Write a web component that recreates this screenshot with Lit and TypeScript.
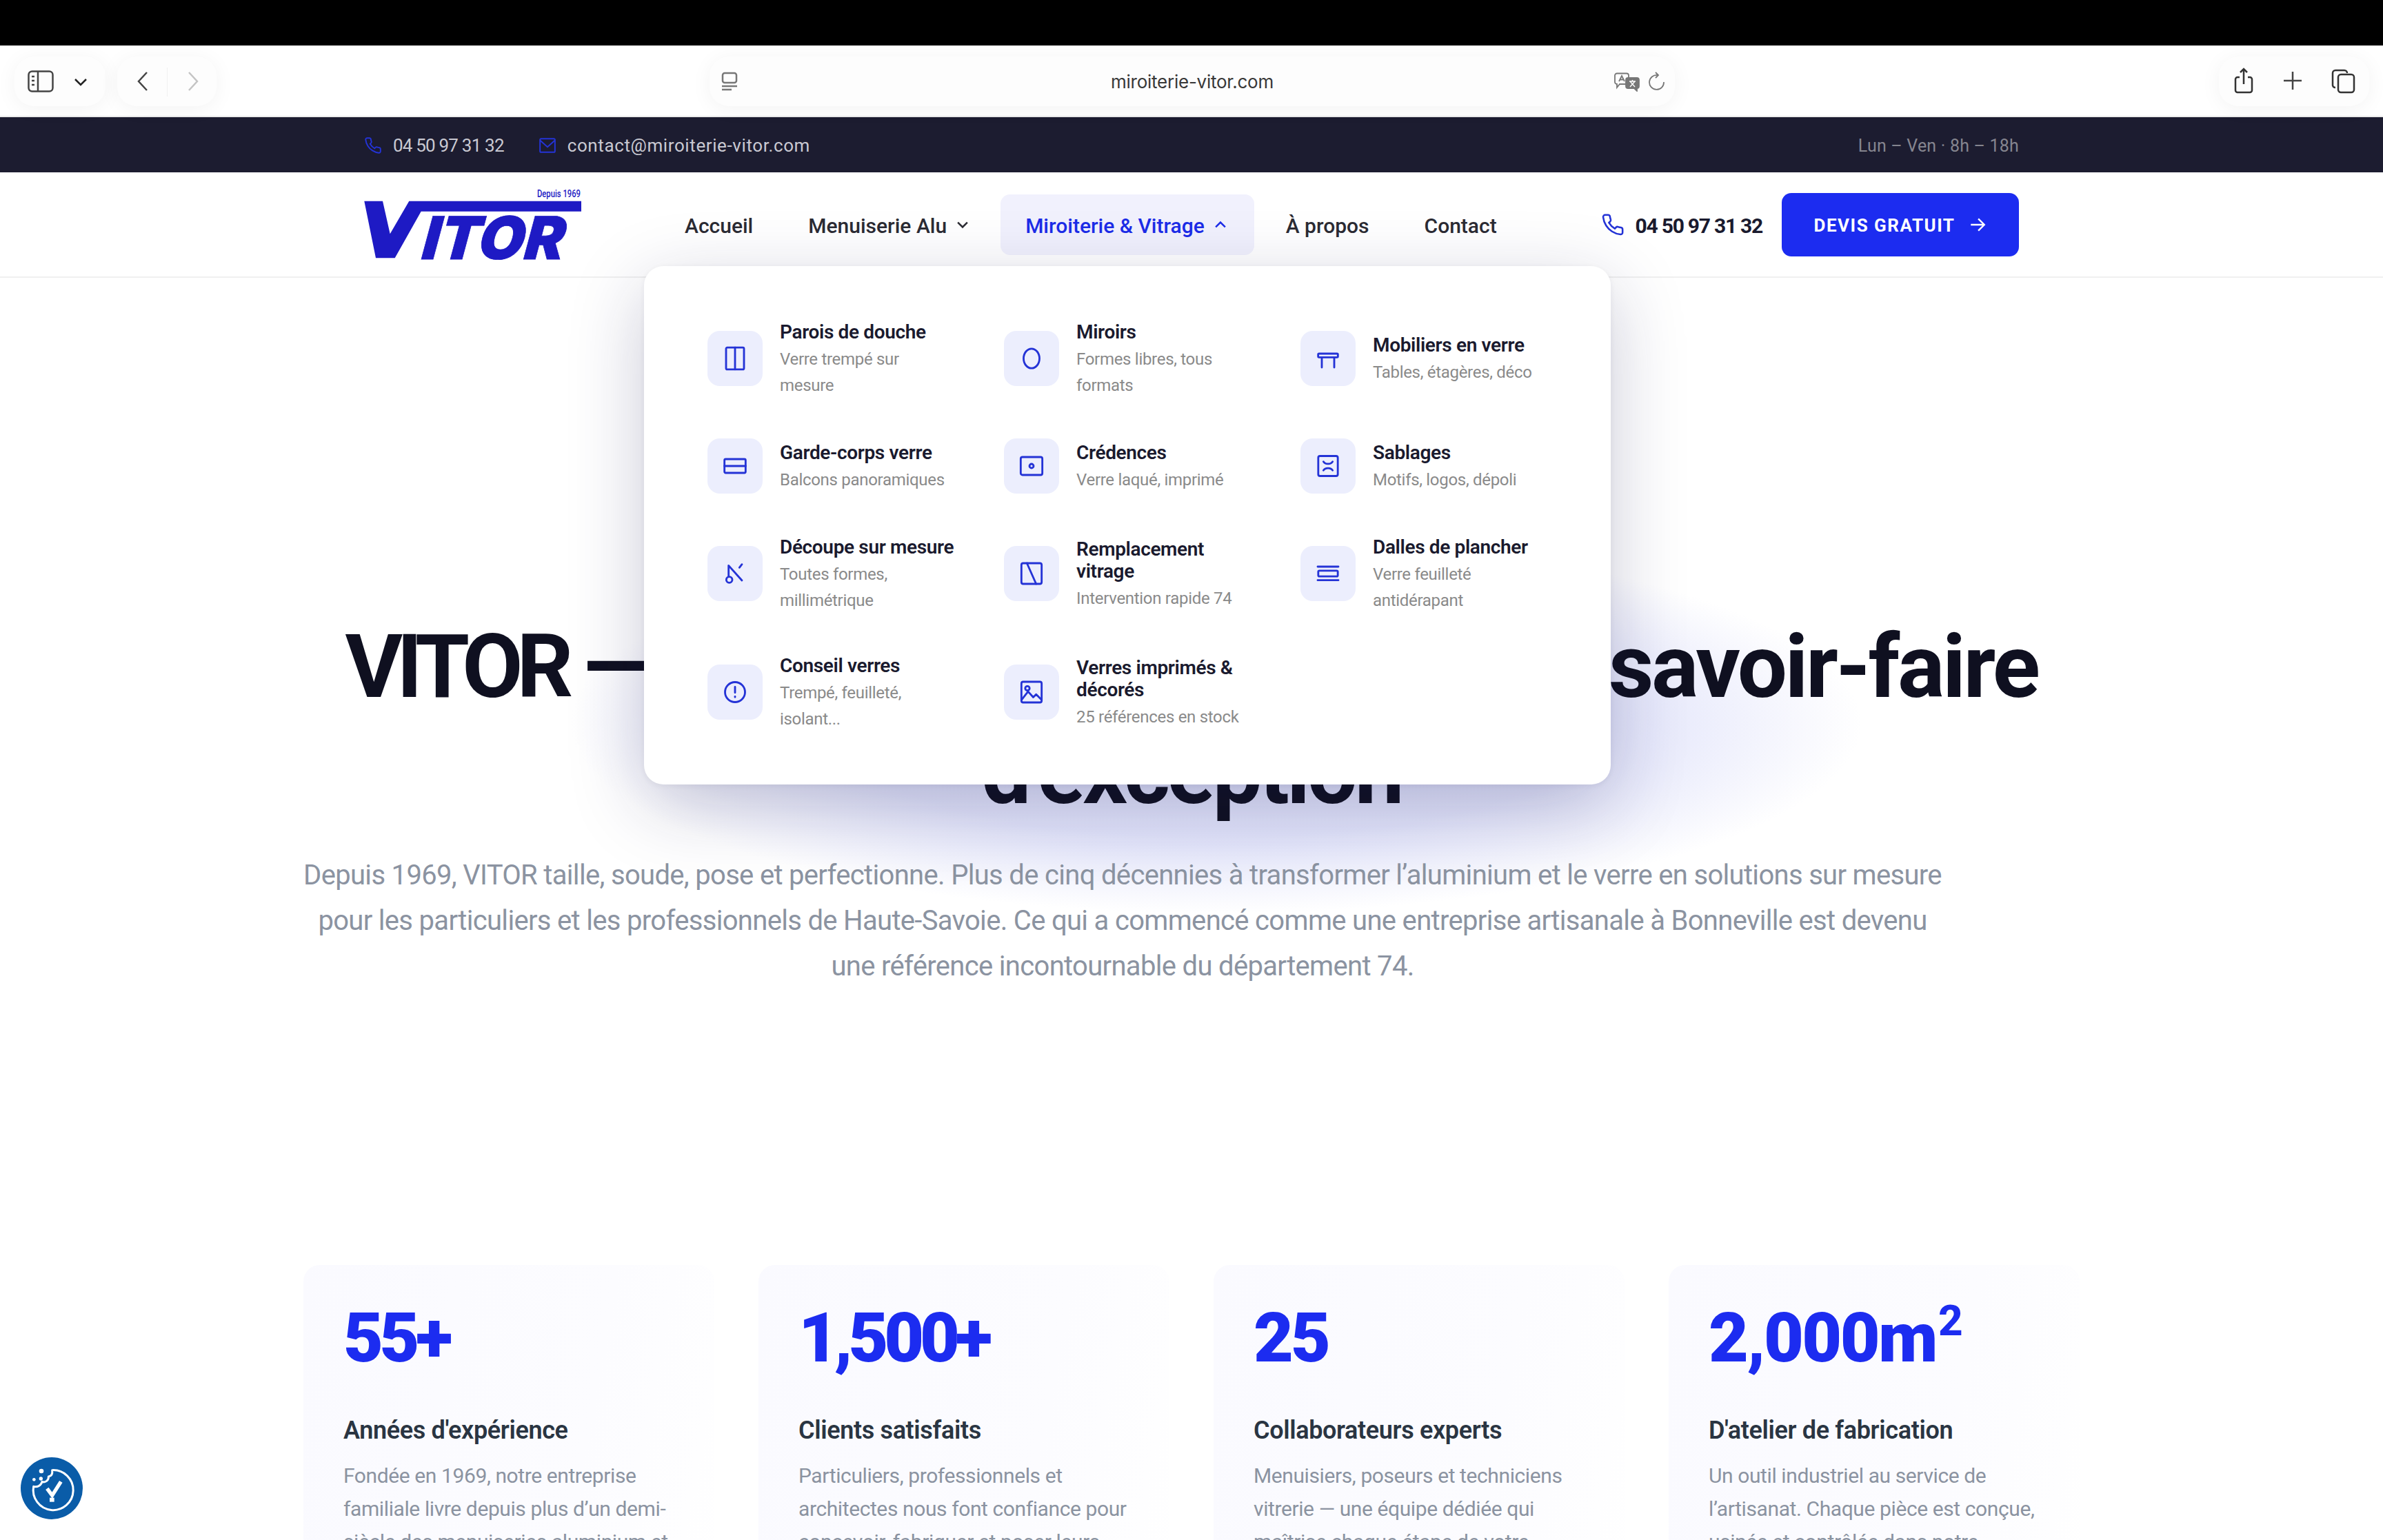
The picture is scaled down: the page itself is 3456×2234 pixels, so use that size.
import { LitElement, html, css, svg } from "lit";
import { customElement } from "lit/decorators.js";

const P = "M22 16.92v3a2 2 0 0 1-2.18 2 19.79 19.79 0 0 1-8.63-3.07 19.5 19.5 0 0 1-6-6 19.79 19.79 0 0 1-3.07-8.67A2 2 0 0 1 4.11 2h3a2 2 0 0 1 2 1.72 12.84 12.84 0 0 0 .7 2.81 2 2 0 0 1-.45 2.11L8.09 9.91a16 16 0 0 0 6 6l1.27-1.27a2 2 0 0 1 2.11-.45 12.84 12.84 0 0 0 2.81.7A2 2 0 0 1 22 16.92z";

const items = [
  { t: ["Parois de douche"], d: ["Verre trempé sur", "mesure"], i: svg`<rect x="4.2" y="2.5" width="15.6" height="19" rx="1"/><path d="M12 2.5v19"/>` },
  { t: ["Miroirs"], d: ["Formes libres, tous", "formats"], i: svg`<ellipse cx="12" cy="12" rx="6.9" ry="8.5"/>` },
  { t: ["Mobiliers en verre"], d: ["Tables, étagères, déco"], i: svg`<rect x="3.4" y="7.8" width="17.2" height="3.2" rx=".8"/><path d="M6.6 11v8.8M17.4 11v8.8"/>` },
  { t: ["Garde-corps verre"], d: ["Balcons panoramiques"], i: svg`<rect x="2.8" y="6" width="18.4" height="12" rx="1"/><path d="M2.8 12h18.4"/>` },
  { t: ["Crédences"], d: ["Verre laqué, imprimé"], i: svg`<rect x="2.6" y="4.2" width="18.8" height="15.6" rx="1.5"/><circle cx="12" cy="12" r="1.8"/>` },
  { t: ["Sablages"], d: ["Motifs, logos, dépoli"], i: svg`<rect x="3.5" y="3.3" width="17" height="17.4" rx="1.5"/><path d="M8 8.2c1.5 2.6 6.500 2.600 8 0M8 15.800c1.500-2.600 6.500-2.600 8 0"/>` },
  { t: ["Découpe sur mesure"], d: ["Toutes formes,", "millimétrique"], i: svg`<circle cx="7" cy="17.4" r="2.6"/><path d="M6.400 14.800V5L18 18M15.800 6.800 18 4"/>` },
  { t: ["Remplacement", "vitrage"], d: ["Intervention rapide 74"], i: svg`<rect x="3.200" y="3" width="17.600" height="18" rx="1.500"/><path d="M8 3l8 18"/>` },
  { t: ["Dalles de plancher"], d: ["Verre feuilleté", "antidérapant"], i: svg`<path d="M3 6h18M3 17.800h18"/><rect x="3.500" y="9.500" width="17" height="5" rx="1"/>` },
  { t: ["Conseil verres"], d: ["Trempé, feuilleté,", "isolant..."], i: svg`<circle cx="12" cy="12" r="8.700"/><path d="M12 7.500v5M12 15.800v.6"/>` },
  { t: ["Verres imprimés &", "décorés"], d: ["25 références en stock"], i: svg`<rect x="3.200" y="3" width="17.600" height="18" rx="1.500"/><circle cx="8.400" cy="8.700" r="1.900"/><path d="M3.500 18.500 9 11.500l4.500 5 2.500-2.500 4.500 4.500"/>` },
];

const cards = [
  { k: "n1", n: "55+", t: "Années d'expérience", l: ["Fondée en 1969, notre entreprise", "familiale livre depuis plus d’un demi-", "siècle des menuiseries aluminium et"] },
  { k: "n2", n: "1,500+", t: "Clients satisfaits", l: ["Particuliers, professionnels et", "architectes nous font confiance pour", "concevoir, fabriquer et poser leurs"] },
  { k: "n3", n: "25", t: "Collaborateurs experts", l: ["Menuisiers, poseurs et techniciens", "vitrerie — une équipe dédiée qui", "maîtrise chaque étape de votre"] },
  { k: "n4", n: "2,000m", sup: "2", t: "D'atelier de fabrication", l: ["Un outil industriel au service de", "l’artisanat. Chaque pièce est conçue,", "usinée et contrôlée dans notre"] },
];

const chevDown = html`<svg class="chev" viewBox="0 0 16 16"><path d="M3 5.500 8 10.500 13 5.500"/></svg>`;
const chevUp = html`<svg class="chev" viewBox="0 0 16 16"><path d="M3 10.500 8 5.500 13 10.500"/></svg>`;

@customElement("app-root")
export class AppRoot extends LitElement {
  static styles = css`
    :host {
      display: block; position: relative; width: 3456px; height: 2234px; overflow: hidden; background: #fff;
      font-family: Roboto, "Liberation Sans", sans-serif; color: #1a1a2e;
    }
    svg { display: block; flex: none; }
    .black { height: 66px; background: #000; }
    .toolbar {
      height: 104px; box-sizing: border-box; border-bottom: 2px solid #ececec; background: #fff; display: flex; align-items: flex-start;
      padding: 16px 20px 0 21px;
    }
    .pill {
      height: 72px; border-radius: 28px; background: #fdfdfd; box-shadow: 0 4px 30px rgba(0,0,0,.05);
      display: flex; align-items: center; position: relative; flex: none;
    }
    .p1 { width: 132px; } .p2 { width: 144px; margin-left: 17px; }
    .p3 { width: 1400px; margin-left: 715px; justify-content: center; }
    .p4 { width: 218px; margin-left: 789px; }
    .tb-ic { fill: none; stroke: #444; stroke-width: 2.500; position: absolute; top: 0; }
    .sb { left: 19px; width: 38px; height: 32px; margin-top: 20px; }
    .dn { left: 86px; width: 20px; height: 12px; margin-top: 31px; stroke: #222; }
    .bk { left: 29px; width: 16px; height: 30px; margin-top: 21px; }
    .fw { left: 102px; width: 16px; height: 30px; margin-top: 21px; stroke: #c4c4c4; }
    .sep { position: absolute; left: 72px; top: 16px; width: 1px; height: 42px; background: #f0f0f0; }
    .ru { left: 17px; width: 24px; height: 28px; margin-top: 22px; stroke: #777; }
    .url { font-family: Inter, sans-serif; font-size: 26px; color: #383838; letter-spacing: -0.25px; }
    .tr { left: 1311px; width: 38px; height: 28px; margin-top: 23px; stroke: #777; stroke-width: 1.800; }
    .rl { left: 1362px; width: 24px; height: 28px; margin-top: 22px; stroke: #777; stroke-width: 1.800; }
    .sh { left: 22px; width: 28px; height: 38px; margin-top: 16px; stroke: #333; }
    .pl { left: 93px; width: 28px; height: 28px; margin-top: 21px; stroke: #444; }
    .tb { left: 163px; width: 35px; height: 36px; margin-top: 18px; stroke: #333; }

    .top { height: 80px; background: #1c1c30; display: flex; justify-content: center; }
    .wrap { width: 2400px; display: flex; align-items: center; }
    .top-i { display: flex; align-items: center; gap: 16px; font-size: 26px; line-height: 30px; padding-top: 2px; color: #c9c9d2; margin-right: 50px; letter-spacing: .6px; white-space: nowrap; }
    .top-i.tel { letter-spacing: -.8px; }
    .top-i svg { width: 26px; height: 26px; fill: none; stroke: #2433d6; stroke-width: 1.800; }
    .hours { margin-left: auto; font-size: 25px; padding-top: 2px; color: #85858f; letter-spacing: .2px; }

    .head { height: 153px; border-bottom: 2px solid #f0f0f0; box-sizing: border-box; display: flex; justify-content: center; }
    .logo { width: 316px; height: 102px; margin-top: 25px; align-self: flex-start; }
    .logo .v { fill: #1e1ac4; stroke: none; }
    .logo text { fill: #1e1ac4; font-family: Inter, sans-serif; }
    .logo .big { font-weight: 900; font-size: 86px; stroke: #1e1ac4; stroke-width: .8px; }
    .logo .dep { font-family: Roboto, sans-serif; font-weight: 500; font-size: 14px; }
    nav { display: flex; align-items: center; margin-left: 113px; gap: 8px; }
    .nv { height: 88px; display: flex; align-items: center; gap: 12px; padding: 0 36px; font-size: 30px; font-weight: 500; color: #2b2b33; border-radius: 14px; box-sizing: border-box; white-space: nowrap; }
    .nv span { padding-top: 3px; }
    .nv.on { background: #f1f1fd; color: #1c2ce8; padding: 0 38px 0 36px; margin-right: 2px; }
    .chev { width: 22px; height: 22px; fill: none; stroke: currentColor; stroke-width: 1.800; }
    .hr { margin-left: auto; display: flex; align-items: center; }
    .ph { display: flex; align-items: center; gap: 16px; font-size: 30px; font-weight: 700; margin-right: 28px; color: #1a1a2e; white-space: nowrap; letter-spacing: -1.250px; }
    .ph span { padding-top: 3px; }
    .ph svg { width: 34px; height: 34px; fill: none; stroke: #2433d6; stroke-width: 1.800; }
    .btn { width: 344px; height: 92px; background: #1c2cf0; color: #fff; border-radius: 14px; display: flex; align-items: center; justify-content: center; gap: 20px; font-size: 26px; font-weight: 700; letter-spacing: 1.500px; white-space: nowrap; }
    .btn span { padding-top: 2px; }
    .btn svg { width: 26px; height: 26px; fill: none; stroke: #fff; stroke-width: 2.200; }

    main { width: 2576px; margin: 0 auto; position: relative; }
    .glow { position: absolute; left: 386px; top: 372px; width: 1874px; height: 550px; background: radial-gradient(ellipse closest-side, rgba(190,195,245,.58), rgba(190,195,245,.46) 60%, rgba(190,195,245,0)); }
    .hero { position: relative; padding-top: 487px; }
    h1 { margin: 0; font-size: 128px; line-height: 154px; font-weight: 700; color: #0f1020; text-align: center; letter-spacing: -3.800px; }
    .l1 { width: 2455px; margin: 0 auto; display: flex; justify-content: space-between; }
    .l1 .a { letter-spacing: -9px; }
    .l1 .b { letter-spacing: -3.400px; }
    .lead { width: 2376px; margin: 39px 0 0; font-size: 40px; line-height: 66px; color: #8b93a1; text-align: center; white-space: nowrap; letter-spacing: -.68px; }
    .cards { position: relative; display: grid; grid-template-columns: repeat(4, 596px); gap: 64px; margin-top: 400px; }
    .card { height: 600px; padding: 46px 58px 0; background: linear-gradient(100deg, #fafaff, #fcfcff 65%, #fff 100%); border-radius: 24px; box-sizing: border-box; white-space: nowrap; }
    .num { font-size: 100px; line-height: 120px; font-weight: 900; color: #1c2cf0; }
    .n1 { letter-spacing: -5.500px; }
    .n2 { letter-spacing: -6.200px; }
    .n3 { letter-spacing: -4px; }
    .n4 { letter-spacing: -2.500px; }
    .num sup { font-size: 62px; line-height: 0; vertical-align: 38px; letter-spacing: 0; font-weight: 800; margin-left: 3px; }
    .ct { margin-top: 50px; font-size: 36px; line-height: 48px; font-weight: 600; color: #2a3542; letter-spacing: -.35px; }
    .cd { margin-top: 18px; font-size: 30px; line-height: 48px; color: #8b93a1; letter-spacing: -.4px; }

    .menu {
      position: absolute; left: 934px; top: 386px; width: 1402px; height: 752px; box-sizing: border-box; background: #fff;
      border-radius: 28px; padding: 78px 0 0 92px; box-shadow: 0 30px 110px rgba(26,26,80,.23), 0 2px 8px rgba(26,26,46,.06);
      display: grid; grid-template-columns: repeat(3, 370px); column-gap: 60px; row-gap: 60px; align-content: start; align-items: center;
    }
    .it { display: flex; align-items: center; gap: 25px; white-space: nowrap; }
    .tile { width: 80px; height: 80px; flex: none; border-radius: 18px; background: #eceefd; display: flex; align-items: center; justify-content: center; }
    .tile svg { width: 40px; height: 40px; fill: none; stroke: #2433d6; stroke-width: 1.700; stroke-linecap: round; stroke-linejoin: round; }
    .txt { margin: 2px 0 -2px; }
    .tt { font-size: 28px; line-height: 32px; font-weight: 600; color: #1a1a2e; letter-spacing: -.35px; }
    .dd { margin-top: 4px; font-size: 24px; line-height: 38px; color: #8a8a8a; letter-spacing: -.3px; }
    .badge { position: absolute; left: 30px; top: 2114px; width: 90px; height: 90px; }
  `;

  render() {
    return html`
      <div class="black"></div>
      <div class="toolbar">
        <div class="pill p1">
          <svg class="tb-ic sb" viewBox="0 0 38 32"><rect x="1.500" y="1.500" width="35" height="29" rx="5"/><path d="M15 1.500v29M6 9h4M6 15h4M6 21h4"/></svg>
          <svg class="tb-ic dn" viewBox="0 0 20 12"><path d="M2 2l8 8 8-8"/></svg>
        </div>
        <div class="pill p2">
          <svg class="tb-ic bk" viewBox="0 0 16 30"><path d="M14 2 2 15l12 13"/></svg>
          <span class="sep"></span>
          <svg class="tb-ic fw" viewBox="0 0 16 30"><path d="M2 2l12 13L2 28"/></svg>
        </div>
        <div class="pill p3">
          <svg class="tb-ic ru" viewBox="0 0 24 28"><rect x="2" y="2" width="20" height="14" rx="3"/><path d="M1 21h22M1 26h14"/></svg>
          <span class="url">miroiterie-vitor.com</span>
          <svg class="tb-ic tr" viewBox="0 0 38 28"><path d="M5 1.500h14a3 3 0 0 1 3 3V14a3 3 0 0 1-3 3H9l-4 5v-5a3 3 0 0 1-3-3V4.500a3 3 0 0 1 3-3z" fill="#fff"/><path d="M8 13l4-8 4 8M9.500 10.500h5"/><path d="M21 8h13a3 3 0 0 1 3 3v9a3 3 0 0 1-3 3v4l-4-4h-9a3 3 0 0 1-3-3v-9a3 3 0 0 1 3-3z" fill="#777"/><path d="M23 13h9M27.500 11v2M24 21l7-8M31 21l-7-8" stroke="#fff" stroke-width="1.400"/></svg>
          <svg class="tb-ic rl" viewBox="0 0 24 28"><path d="M13 5A10.500 10.500 0 1 0 22 15"/><path d="M10 1l4 4-4 4"/></svg>
        </div>
        <div class="pill p4">
          <svg class="tb-ic sh" viewBox="0 0 28 38"><path d="M8 14H5a3 3 0 0 0-3 3v16a3 3 0 0 0 3 3h18a3 3 0 0 0 3-3V17a3 3 0 0 0-3-3h-3M14 24V2M9 7l5-5 5 5"/></svg>
          <svg class="tb-ic pl" viewBox="0 0 28 28"><path d="M14 1v26M1 14h26"/></svg>
          <svg class="tb-ic tb" viewBox="0 0 35 36"><path d="M6 27a4 4 0 0 1-4-3V6a4 4 0 0 1 4-4h13a4 4 0 0 1 4 4"/><rect x="10" y="8" width="23" height="26" rx="4"/></svg>
        </div>
      </div>

      <div class="top"><div class="wrap">
        <div class="top-i tel"><svg viewBox="0 0 24 24"><path d="${P}"/></svg>04 50 97 31 32</div>
        <div class="top-i"><svg viewBox="0 0 24 24"><rect x="2" y="3" width="20" height="18" rx="1.500"/><path d="M2 5l10 9 10-9"/></svg>contact@miroiterie-vitor.com</div>
        <div class="hours">Lun – Ven · 8h – 18h</div>
      </div></div>

      <header class="head"><div class="wrap">
        <svg class="logo" viewBox="0 0 316 102">
          <text class="dep" x="314" y="11" text-anchor="end" textLength="63" lengthAdjust="spacingAndGlyphs">Depuis 1969</text>
          <polygon class="v" points="0.300,16.700 27,16.700 37.700,64.300 65.300,16.700 315,16.700 315,31.700 82.700,31.700 44.700,99.300 17,99.300"/>
          <text class="big" transform="translate(79,101.300) skewX(-15)" textLength="206" lengthAdjust="spacingAndGlyphs">ITOR</text>
        </svg>
        <nav>
          <div class="nv"><span>Accueil</span></div>
          <div class="nv"><span>Menuiserie Alu</span> ${chevDown}</div>
          <div class="nv on"><span>Miroiterie &amp; Vitrage</span> ${chevUp}</div>
          <div class="nv"><span>À propos</span></div>
          <div class="nv"><span>Contact</span></div>
        </nav>
        <div class="hr">
          <div class="ph"><svg viewBox="0 0 24 24"><path d="${P}"/></svg><span>04 50 97 31 32</span></div>
          <div class="btn"><span>DEVIS GRATUIT</span> <svg viewBox="0 0 24 24"><path d="M3 12h18M13 4l8 8-8 8"/></svg></div>
        </div>
      </div></header>

      <main>
        <div class="glow"></div>
        <section class="hero">
          <h1><div class="l1"><span class="a">VITOR —</span><span class="b">savoir-faire</span></div>d'exception</h1>
          <p class="lead">Depuis 1969, VITOR taille, soude, pose et perfectionne. Plus de cinq décennies à transformer l’aluminium et le verre en solutions sur mesure<br>pour les particuliers et les professionnels de Haute-Savoie. Ce qui a commencé comme une entreprise artisanale à Bonneville est devenu<br>une référence incontournable du département 74.</p>
        </section>
        <section class="cards">
          ${cards.map((c) => html`<div class="card">
            <div class="num ${c.k}">${c.n}${c.sup ? html`<sup>${c.sup}</sup>` : ""}</div>
            <div class="ct">${c.t}</div>
            <div class="cd">${c.l.map((x) => html`<div>${x}</div>`)}</div>
          </div>`)}
        </section>
      </main>

      <div class="menu">
        ${items.map((it) => html`<div class="it">
          <div class="tile"><svg viewBox="0 0 24 24">${it.i}</svg></div>
          <div class="txt">
            <div class="tt">${it.t.map((x) => html`<div>${x}</div>`)}</div>
            <div class="dd">${it.d.map((x) => html`<div>${x}</div>`)}</div>
          </div>
        </div>`)}
      </div>

      <svg class="badge" viewBox="0 0 270 270">
        <circle cx="135" cy="135" r="135" fill="#0a5ca8"/>
        <path d="M56 127A87 87 0 1 0 137 56c2 14-2 26-16 28 2 16-14 28-28 22-4 16-20 26-37 21z" fill="none" stroke="#fff" stroke-width="9" stroke-linejoin="round"/>
        <circle cx="90" cy="60" r="10" fill="#fff"/><circle cx="58" cy="97" r="7" fill="#fff"/><circle cx="88" cy="93" r="8" fill="#fff"/>
        <path d="M115 136l22 30 38-60" fill="none" stroke="#fff" stroke-width="16"/>
        <rect x="126" y="176" width="20" height="18" fill="#fff"/>
      </svg>
    `;
  }
}
